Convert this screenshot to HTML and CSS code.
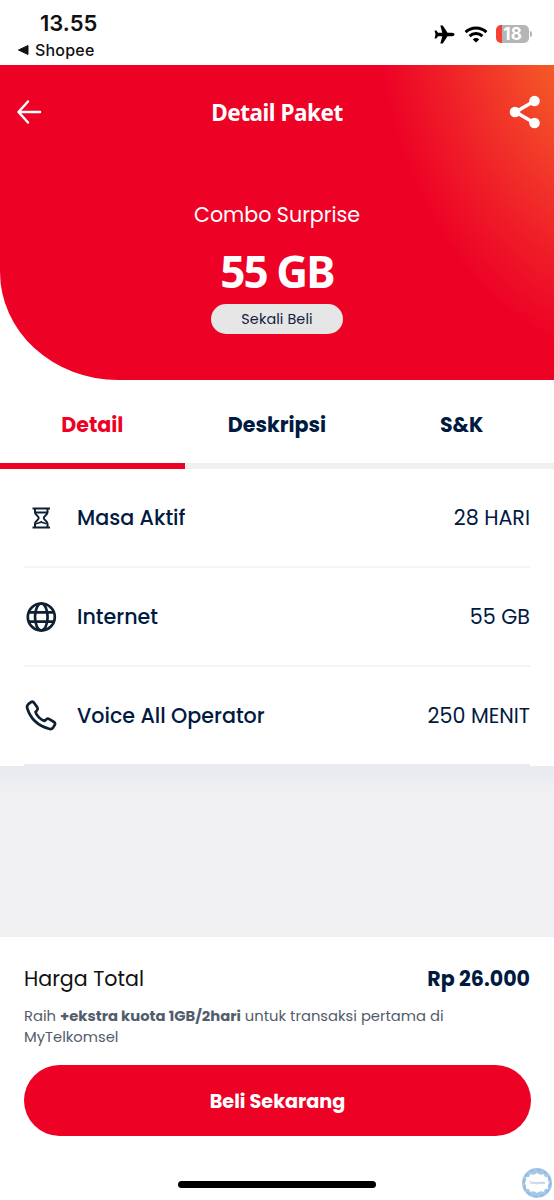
FILE: index.html
```html
<!DOCTYPE html>
<html lang="id">
<head>
<meta charset="utf-8">
<title>Detail Paket</title>
<link rel="stylesheet" href="styles.css">
</head>
<body>
<div class="status">
  <div class="status-left">
    <div class="clock">13.55</div>
    <div class="back-app"><svg width="11" height="10" viewBox="0 0 11 10"><path d="M10 .5v9L.5 5z" fill="#111" stroke="#111" stroke-linejoin="round"/></svg><span>Shopee</span></div>
  </div>
  <div class="status-right">
    <svg width="21" height="19" viewBox="0 0 21 19"><path d="M20.500 9.500c0-.9-1.200-1.700-2.500-1.700h-4.500L8.800.5H6.300L8.300 7.800H4L2.400 5.600H.6L1.500 9.500.6 13.400h1.800L4 11.200h4.300l-2 7.300h2.500l4.700-7.300H18c1.300 0 2.500-.8 2.500-1.700z" fill="#000"/></svg>
    <svg class="wifi" width="24" height="17" viewBox="0 0 24 17"><g fill="none" stroke="#000" stroke-width="3"><path d="M1.600 6.100a15 15 0 0 1 20.800 0"/><path d="M5.600 10.200a9.200 9.200 0 0 1 12.800 0"/></g><path d="M8.800 13.400a4.600 4.600 0 0 1 6.400 0L12 16.600z" fill="#000"/></svg>
    <div class="battery"><span>18</span></div><i class="battery-tip"></i>
  </div>
</div>

<header class="hero">
  <nav class="navbar">
    <svg width="26" height="26" viewBox="0 0 26 26" fill="none" stroke="#fff" stroke-width="2.500" stroke-linecap="round" stroke-linejoin="round"><path d="M24 13H3M12 2.500 2.500 13 12 23.500"/></svg>
    <h1>Detail Paket</h1>
    <svg width="32" height="34" viewBox="0 0 32 34"><path d="M25.500 6 6.500 17l19 11" fill="none" stroke="#fff" stroke-width="3.500"/><g fill="#fff"><circle cx="25.500" cy="6" r="5.300"/><circle cx="6" cy="17" r="5.300"/><circle cx="25.500" cy="28" r="5.300"/></g></svg>
  </nav>
  <div class="plan">Combo Surprise</div>
  <div class="quota">55 GB</div>
  <div class="pill">Sekali Beli</div>
</header>

<div class="tabs">
  <div class="tab active">Detail</div>
  <div class="tab">Deskripsi</div>
  <div class="tab">S&amp;K</div>
</div>

<main class="list">
  <div class="row">
    <svg width="34" height="34" viewBox="0 0 34 34" fill="none" stroke="#0e2133" stroke-width="2"><path d="M8.500 7.500h17.500M8.500 26.500h17.500M11 8v3.500c0 2.500 3.700 3.500 3.700 5.500s-3.700 3-3.700 5.500v4M23.500 8v3.500c0 2.500-3.700 3.500-3.700 5.500s3.700 3 3.700 5.500v4M11.500 11.500h11.500"/><path d="M12 23c1.500-1.300 3.500-.7 5.200-2.200 1.700 1.500 3.800.9 5.300 2.200" stroke-width="1.600"/></svg>
    <span class="label">Masa Aktif</span><span class="value">28 HARI</span>
  </div>
  <div class="row">
    <svg width="34" height="34" viewBox="0 0 34 34" fill="none" stroke="#0e2133" stroke-width="2.700"><circle cx="17.300" cy="17" r="13.500"/><ellipse cx="17.300" cy="17" rx="6.300" ry="13.500"/><path d="M4.800 12.300h25M4.800 21.700h25"/></svg>
    <span class="label">Internet</span><span class="value">55 GB</span>
  </div>
  <div class="row">
    <svg width="34" height="34" viewBox="0 0 34 34" fill="none" stroke="#0e2133" stroke-width="2.700" stroke-linejoin="round"><path d="M4.300 5.200 7 3.200c1-.7 2.200-.5 3 .5l3.300 4.700c.7 1 .5 2.100-.3 3l-1.500 1.500c1 3.800 5 7.700 9 9l2-1.700c.8-.7 1.900-.7 2.800-.1l4.700 2.900c1.100.7 1.400 2 .7 3l-1.500 2.400c-.9 1.300-2.600 1.900-4.300 1.400C14 26.700 6.500 19.500 3.300 9.500c-.5-1.600-.2-3.200 1-4.300z"/></svg>
    <span class="label">Voice All Operator</span><span class="value">250 MENIT</span>
  </div>
</main>

<div class="gap"></div>

<footer class="checkout">
  <div class="total"><span class="total-label">Harga Total</span><span class="price">Rp 26.000</span></div>
  <p class="promo">Raih <b>+ekstra kuota 1GB/2hari</b> untuk transaksi pertama di<br>MyTelkomsel</p>
  <button class="buy">Beli Sekarang</button>
  <div class="home-bar"></div>
  <svg class="badge" width="32" height="32" viewBox="0 0 32 32"><circle cx="16" cy="16" r="15" fill="#a6c8e6"/><circle cx="16" cy="16" r="13.500" fill="none" stroke="#8fb8dd" stroke-width="1.500" stroke-dasharray="4 3"/><path d="M5 10q4 1 4-3 4 2 7-1 3 3 7 1 0 4 4 3-1 3 1 6-2 3-1 6-4-1-4 3-4-2-7 1-3-3-7-1 0-4-4-3 1-3-1-6 2-3 1-6z" fill="#fff"/><text x="16" y="17" text-anchor="middle" font-size="3.200" font-family="Inter, sans-serif" fill="#7ca5cc">Tokopedia</text></svg>
</footer>
</body>
</html>
```
FILE: styles.css
```css
* { box-sizing: border-box; }
body { margin: 0; width: 554px; height: 1200px; overflow: hidden; background: #fff; color: #001a41; font-family: Poppins, Inter, sans-serif; display: flex; flex-direction: column; }
svg { display: block; flex: none; }

.status { height: 65px; display: flex; justify-content: space-between; padding: 10px 22px 0 18px; color: #111; font-family: Inter, sans-serif; }
.clock { font-size: 22px; line-height: 27px; font-weight: 600; padding-left: 22px; }
.back-app { display: flex; align-items: center; gap: 6px; font-size: 16px; line-height: 20px; font-weight: 500; margin-top: 3px; letter-spacing: .2px; }
.status-right { display: flex; align-items: center; height: 28px; margin-top: 10px; }
.wifi { margin-left: 9px; }
.battery { margin-left: 8px; width: 33px; height: 18px; border-radius: 5px; background: linear-gradient(90deg, #f44336 0 6px, #b5b5b5 6px); color: #fff; font-size: 17px; line-height: 18px; font-weight: 700; text-align: center; }
.battery-tip { width: 2px; height: 6px; margin-left: 1px; background: #b5b5b5; border-radius: 0 2px 2px 0; }

.hero { height: 315px; border-radius: 0 0 0 118px / 0 0 0 108px; background: radial-gradient(ellipse 265px 375px at 640px -80px, #f45c28 38%, #f23c29 58%, #ef1f28 78%, #ed0226 100%); color: #fff; display: flex; flex-direction: column; align-items: center; }
.navbar { width: 100%; height: 94px; padding: 0 13px 0 16px; display: flex; justify-content: space-between; align-items: center; }
.navbar h1 { margin: 1px 0 0 3px; font: 700 22.500px/30px "Noto Sans", sans-serif; letter-spacing: -.45px; }
.plan { margin-top: 41px; font-size: 20.600px; line-height: 30px; }
.quota { margin-top: 16px; font: 700 44px/50px "Noto Sans", sans-serif; letter-spacing: -1.900px; }
.pill { margin-top: 8px; width: 132px; height: 30px; border-radius: 15px; background: #e6e6e7; color: #14213f; font-size: 14.400px; line-height: 31px; text-align: center; letter-spacing: .1px; }

.tabs { height: 89px; display: grid; grid-template-columns: repeat(3, 1fr); }
.tab { border-bottom: 6px solid #f0f0f1; text-align: center; font-size: 20.600px; font-weight: 700; line-height: 89px; height: 89px; }
.tab.active { color: #ed0226; border-color: #ed0226; }

.list { padding: 0 24px; }
.row { height: 99px; display: flex; align-items: center; border-bottom: 2px solid #f5f5f6; font-size: 20.650px; }
.row:last-child { border-color: #e9ebf0; }
.row svg { margin-top: 1px; }
.label { margin-left: 19px; font-weight: 500; }
.value { margin-left: auto; font-weight: 400; }

.gap { height: 171px; background: linear-gradient(#e9ebf0 0 10px, #f0f0f2 20px); }
.checkout { position: relative; flex: 1; padding: 26px 24px 0; background: #fff; }
.total { display: flex; justify-content: space-between; line-height: 32px; font-size: 20.600px; }
.total-label { color: #111; }
.price { font-weight: 700; }
.promo { margin: 11px 0 0; font-size: 14.750px; line-height: 21px; color: #525d6c; white-space: nowrap; }
.promo b { font-weight: 700; }
.buy { display: block; width: 507px; height: 71px; margin: 17px 0 0; border: 0; border-radius: 36px; background: #ed0226; color: #fff; font: 700 19.200px/71px Poppins, Inter, sans-serif; }
.home-bar { width: 198px; height: 7px; border-radius: 4px; background: #000; margin: 45px auto 0; }
.badge { position: absolute; right: 1px; bottom: 1px; }
```
